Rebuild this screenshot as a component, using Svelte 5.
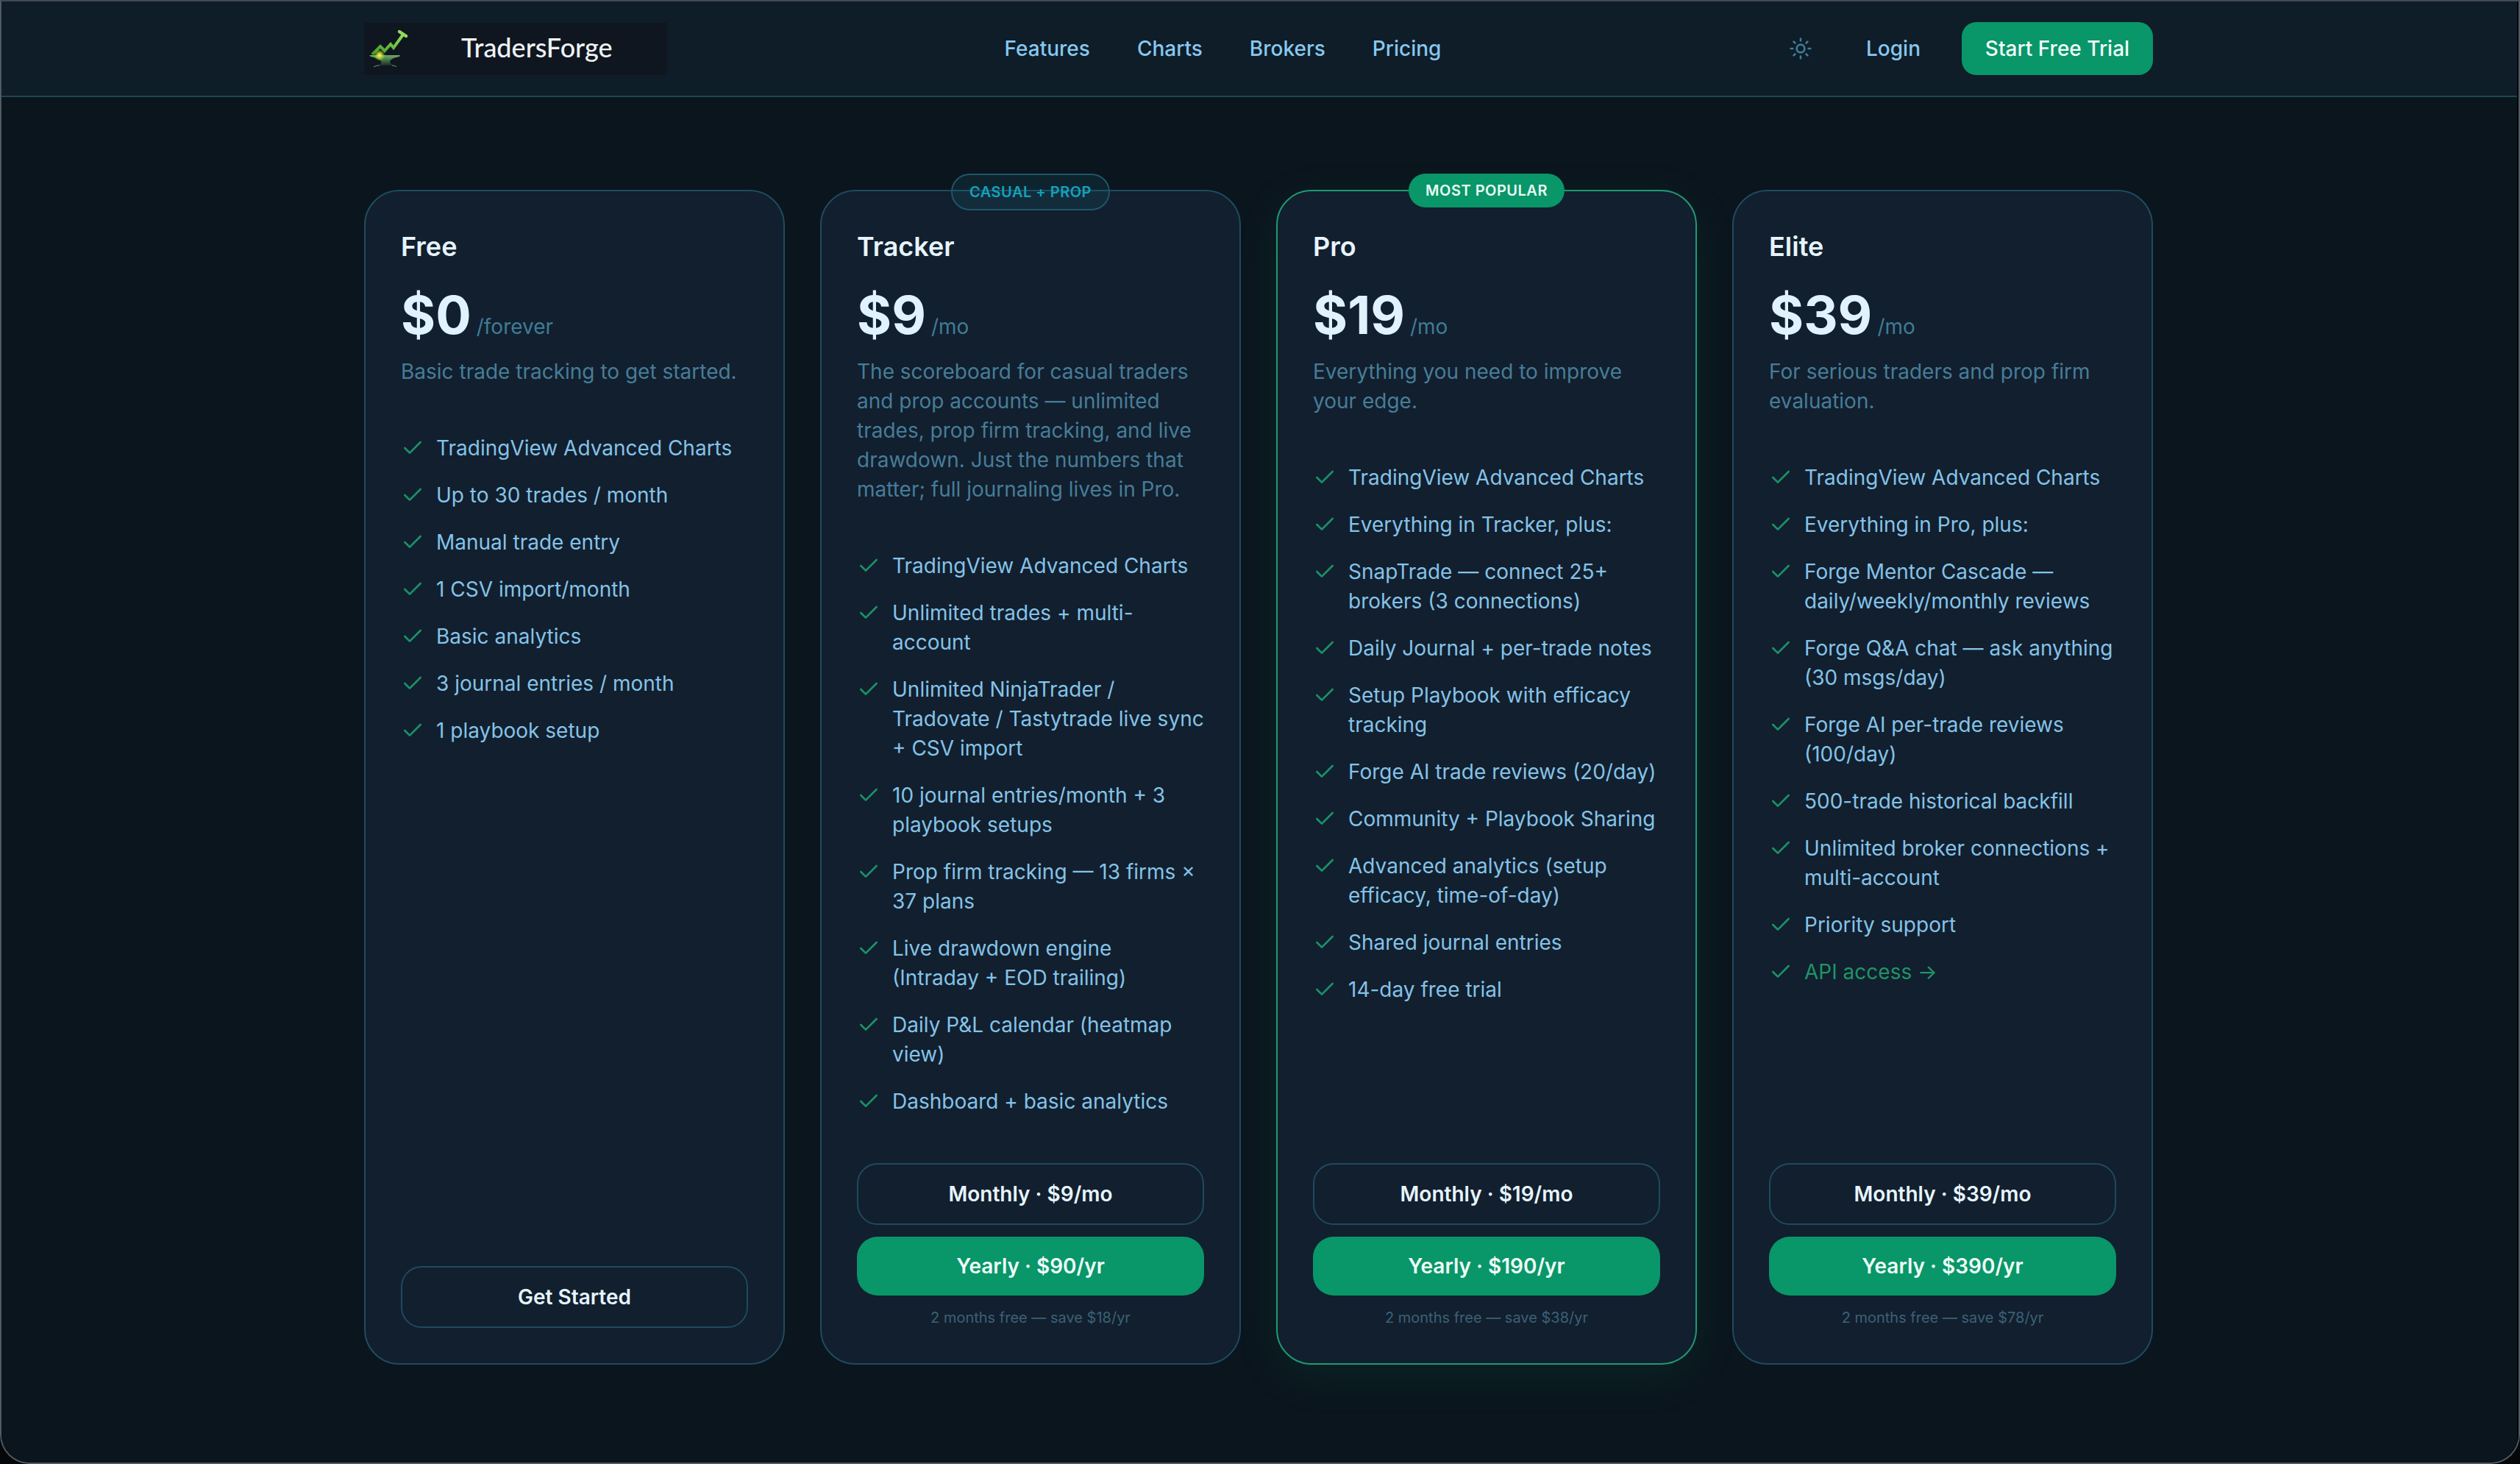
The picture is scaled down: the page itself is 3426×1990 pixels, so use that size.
<script>
  const navLinks = ['Features', 'Charts', 'Brokers', 'Pricing'];
  const plans = [
    {
      name: 'Free', price: '$0', per: '/forever',
      desc: 'Basic trade tracking to get started.',
      features: ['TradingView Advanced Charts', 'Up to 30 trades / month', 'Manual trade entry', '1 CSV import/month', 'Basic analytics', '3 journal entries / month', '1 playbook setup'],
      single: 'Get Started'
    },
    {
      name: 'Tracker', price: '$9', per: '/mo', badge: 'CASUAL + PROP', badgeKind: 'casual',
      desc: 'The scoreboard for casual traders and prop accounts — unlimited trades, prop firm tracking, and live drawdown. Just the numbers that matter; full journaling lives in Pro.',
      features: ['TradingView Advanced Charts', 'Unlimited trades + multi-account', 'Unlimited NinjaTrader / Tradovate / Tastytrade live sync + CSV import', '10 journal entries/month + 3 playbook setups', 'Prop firm tracking — 13 firms × 37 plans', 'Live drawdown engine (Intraday + EOD trailing)', 'Daily P&L calendar (heatmap view)', 'Dashboard + basic analytics'],
      monthly: 'Monthly · $9/mo', yearly: 'Yearly · $90/yr', save: '2 months free — save $18/yr'
    },
    {
      name: 'Pro', price: '$19', per: '/mo', badge: 'MOST POPULAR', badgeKind: 'popular', popular: true,
      desc: 'Everything you need to improve your edge.',
      features: ['TradingView Advanced Charts', 'Everything in Tracker, plus:', 'SnapTrade — connect 25+ brokers (3 connections)', 'Daily Journal + per-trade notes', 'Setup Playbook with efficacy tracking', 'Forge AI trade reviews (20/day)', 'Community + Playbook Sharing', 'Advanced analytics (setup efficacy, time-of-day)', 'Shared journal entries', '14-day free trial'],
      monthly: 'Monthly · $19/mo', yearly: 'Yearly · $190/yr', save: '2 months free — save $38/yr'
    },
    {
      name: 'Elite', price: '$39', per: '/mo',
      desc: 'For serious traders and prop firm evaluation.',
      features: ['TradingView Advanced Charts', 'Everything in Pro, plus:', 'Forge Mentor Cascade — daily/weekly/monthly reviews', 'Forge Q&A chat — ask anything (30 msgs/day)', 'Forge AI per-trade reviews (100/day)', '500-trade historical backfill', 'Unlimited broker connections + multi-account', 'Priority support'],
      extra: 'API access →',
      monthly: 'Monthly · $39/mo', yearly: 'Yearly · $390/yr', save: '2 months free — save $78/yr'
    }
  ];
</script>

{#snippet check()}
  <svg class="check" viewBox="0 0 24 24" fill="none" stroke="currentColor" stroke-width="2" stroke-linecap="round" stroke-linejoin="round"><path d="M20 6 9 17l-5-5" /></svg>
{/snippet}

<div class="window">
  <div class="frame">
    <header class="nav">
      <div class="nav-inner">
        <div class="logo">
          <svg class="mark" viewBox="0 0 90 70">
            <defs>
              <linearGradient id="arrow" x1="0" y1="1" x2="1" y2="0">
                <stop offset="0" stop-color="#3f9a22" />
                <stop offset="1" stop-color="#8fdc5a" />
              </linearGradient>
              <linearGradient id="anvil" x1="0" y1="0" x2="0" y2="1">
                <stop offset="0" stop-color="#6fae6a" />
                <stop offset="1" stop-color="#16301f" />
              </linearGradient>
              <radialGradient id="spark">
                <stop offset="0" stop-color="#fff6a0" />
                <stop offset=".35" stop-color="#d8e82c" stop-opacity=".85" />
                <stop offset="1" stop-color="#9be02c" stop-opacity="0" />
              </radialGradient>
            </defs>
            <path d="M11 43 22 32l6 6 8-9 4 5 13-18" fill="none" stroke="url(#arrow)" stroke-width="4" stroke-linejoin="miter" />
            <path d="M48 12l9 6" fill="none" stroke="#8fdc5a" stroke-width="4.5" stroke-linecap="round" />
            <path d="M7 44h42l-1 2c-6 1-11 3-13 6 0 2 1 4 4 6H20c3-2 4-4 3-6-4-4-10-5-14-6z" fill="url(#anvil)" />
            <path d="M13 60c3-2 6-2 8-2M38 58c3 0 5 1 6 2" fill="none" stroke="#7f9c80" stroke-width="1" />
            <circle cx="21" cy="44" r="8" fill="url(#spark)" />
          </svg>
          <span class="wordmark">TradersForge</span>
        </div>
        <nav class="links">
          {#each navLinks as l}<span>{l}</span>{/each}
        </nav>
        <div class="actions">
          <svg class="sun" viewBox="0 0 24 24" fill="none" stroke="currentColor" stroke-width="2" stroke-linecap="round" stroke-linejoin="round">
            <circle cx="12" cy="12" r="4" />
            <path d="M12 2v2M12 20v2M4.93 4.93l1.41 1.41M17.66 17.66l1.41 1.41M2 12h2M20 12h2M6.34 17.66l-1.41 1.41M19.07 4.93l-1.41 1.41" />
          </svg>
          <span class="login">Login</span>
          <span class="cta">Start Free Trial</span>
        </div>
      </div>
    </header>

    <main class="grid">
      {#each plans as p}
        <section class="card" class:popular={p.popular}>
          {#if p.badge}<span class="badge {p.badgeKind}">{p.badge}</span>{/if}
          <h3>{p.name}</h3>
          <div class="price"><strong>{p.price}</strong><span>{p.per}</span></div>
          <p class="desc">{p.desc}</p>
          <ul>
            {#each p.features as f}
              <li>{@render check()}<span>{f}</span></li>
            {/each}
            {#if p.extra}
              <li class="extra">{@render check()}<span>{p.extra}</span></li>
            {/if}
          </ul>
          <div class="foot">
            {#if p.single}
              <span class="btn outline">{p.single}</span>
            {:else}
              <span class="btn outline">{p.monthly}</span>
              <span class="btn solid">{p.yearly}</span>
              <span class="save">{p.save}</span>
            {/if}
          </div>
        </section>
      {/each}
    </main>
  </div>
</div>

<style>
  :global(body) {
    margin: 0;
    background: #050709;
  }
  .window {
    box-sizing: border-box;
    height: 1990px;
    width: 3426px;
    border: 2px solid #505a61;
    border-top-color: #434953;
    border-radius: 0 0 40px 40px;
    overflow: hidden;
    font-family: Inter, "Liberation Sans", sans-serif;
  }
  .frame {
    box-sizing: border-box;
    height: 100%;
    background: #0b151d;
    border-right: 2px solid #05070a;
  }
  .nav {
    box-sizing: border-box;
    height: 130px;
    background: #0e1d28;
    border-bottom: 2px solid #1d4752;
  }
  .nav-inner {
    width: 2432px;
    height: 128px;
    margin-left: 493px;
    display: flex;
    align-items: center;
    justify-content: space-between;
  }
  .logo {
    width: 412px;
    height: 71px;
    display: flex;
    align-items: center;
    background: #0f161f;
  }
  .mark {
    width: 90px;
    height: 70px;
    flex: none;
  }
  .wordmark {
    margin: 0 0 4px 42px;
    font-family: Lato, Inter, sans-serif;
    font-size: 36px;
    font-weight: 500;
    color: #eef2f5;
  }
  .links {
    display: flex;
    gap: 64px;
    font-size: 28px;
    font-weight: 500;
    color: #88c8ef;
  }
  .actions {
    display: flex;
    align-items: center;
    padding-left: 14px;
  }
  .sun {
    width: 32px;
    height: 32px;
    margin-right: 73px;
    color: #3f7c99;
  }
  .login {
    font-size: 28px;
    font-weight: 500;
    color: #88c8ef;
    margin-right: 56px;
  }
  .cta {
    width: 260px;
    height: 72px;
    display: flex;
    align-items: center;
    justify-content: center;
    border-radius: 20px;
    background: #099668;
    color: #effdf8;
    font-size: 28px;
    font-weight: 500;
  }
  .grid {
    width: 2432px;
    margin: 126px 0 0 493px;
    display: grid;
    grid-template-columns: repeat(4, 1fr);
    gap: 48px;
  }
  .card {
    position: relative;
    display: flex;
    flex-direction: column;
    box-sizing: border-box;
    padding: 48px;
    border: 2px solid #1d4c5e;
    border-radius: 48px;
    background: #121f2e;
  }
  .card.popular {
    border-color: #1f9a72;
    box-shadow: 0 16px 60px rgba(10, 150, 105, 0.12);
  }
  .badge {
    position: absolute;
    top: -24px;
    left: 50%;
    transform: translateX(-50%);
    box-sizing: border-box;
    display: flex;
    align-items: center;
    justify-content: center;
    white-space: nowrap;
    border-radius: 999px;
    font-size: 20px;
    font-weight: 600;
    letter-spacing: 0.5px;
  }
  .badge.casual {
    width: 216px;
    height: 50px;
    border: 2px solid #1e5668;
    background: rgba(34, 130, 155, 0.13);
    color: #12a2ba;
  }
  .badge.popular {
    width: 212px;
    height: 46px;
    background: #099668;
    color: #eafbf4;
  }
  h3 {
    margin: 0 0 30px;
    font-size: 36px;
    line-height: 54px;
    font-weight: 600;
    color: #e6f4fd;
  }
  .price {
    display: flex;
    align-items: baseline;
    gap: 7px;
    line-height: 72px;
  }
  .price strong {
    font-size: 72px;
    font-weight: 700;
    color: #e0f2fe;
  }
  .price span {
    font-size: 28px;
    color: #3f7c96;
  }
  .desc {
    margin: 5px 0 0;
    font-size: 28px;
    line-height: 40px;
    color: #467d98;
  }
  ul {
    list-style: none;
    margin: 64px 0 64px;
    padding: 0;
    flex: 1;
    display: flex;
    flex-direction: column;
    gap: 24px;
  }
  li {
    display: flex;
    gap: 16px;
    font-size: 28px;
    line-height: 40px;
    color: #84c3e8;
  }
  .check {
    width: 32px;
    height: 32px;
    flex: none;
    margin-top: 4px;
    color: #1a9268;
  }
  li.extra {
    color: #1f9468;
  }
  .foot {
    display: flex;
    flex-direction: column;
    gap: 16px;
  }
  .btn {
    box-sizing: border-box;
    display: flex;
    align-items: center;
    justify-content: center;
    font-size: 28px;
    font-weight: 600;
    border-radius: 28px;
  }
  .btn.outline {
    height: 84px;
    border: 2px solid #1e4a60;
    color: #e6f4fd;
  }
  .btn.solid {
    height: 80px;
    background: #099668;
    color: #effdf8;
  }
  .save {
    text-align: center;
    font-size: 20px;
    line-height: 28px;
    color: #3b6177;
  }
</style>
